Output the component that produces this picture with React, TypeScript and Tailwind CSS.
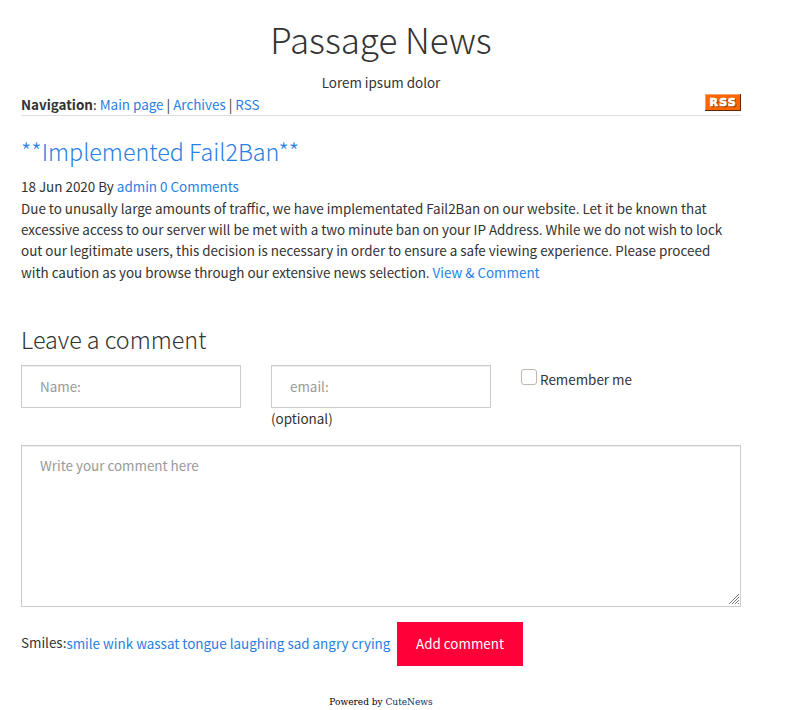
import React from 'react';

const smiles = ['smile', 'wink', 'wassat', 'tongue', 'laughing', 'sad', 'angry', 'crying'];

function Link({ children }: { children: React.ReactNode }) {
  return <a href="#" className="text-[#2780e3]">{children}</a>;
}

function RssBadge() {
  return (
    <svg width="36" height="17" viewBox="0 0 36 17" className="mb-[4px] block">
      <rect width="36" height="17" fill="#ff6600" />
      <path d="M0 .5H35M.5 0V16" stroke="#ffa264" fill="none" />
      <path d="M0 16.5H36M35.5 0V17" stroke="#5c2700" fill="none" />
      <g fontFamily="'DejaVu Sans', sans-serif" fontWeight="700" fontSize="11" strokeWidth="0.7">
        <text x="5.6" y="13" textLength="26" fill="#8f3900" stroke="#8f3900">RSS</text>
        <text x="4.6" y="12" textLength="26" fill="#fff" stroke="#fff">RSS</text>
      </g>
    </svg>
  );
}

export default function App() {
  return (
    <div className="h-[710px] w-[793px] overflow-hidden bg-white pl-[21px] pt-[18px] font-['Noto_Sans_CJK_SC','Source_Sans_Pro',sans-serif] text-[13.43px] leading-[21.4px] text-[#333333]">
      <div className="w-[720px]">
        <header>
          <h1 className="h-[42px] text-center text-[35px] font-light leading-[42px]">Passage News</h1>
          <div className="mt-[12px] text-center">Lorem ipsum dolor</div>
          <div className="flex h-[23px] items-end justify-between border-b border-[#dddddd]">
            <nav className="whitespace-nowrap">
              <b>Navigation</b>: <Link>Main page</Link> | <Link>Archives</Link> | <Link>RSS</Link>
            </nav>
            <RssBadge />
          </div>
        </header>

        <article className="pt-[21px]">
          <h2 className="h-[29px] text-[23.3px] font-light leading-[29px]"><Link>**Implemented Fail2Ban**</Link></h2>
          <div className="mt-[9.7px]">18 Jun 2020 By <Link>admin</Link> <Link>0 Comments</Link></div>
          <p className="whitespace-nowrap">
            Due to unusally large amounts of traffic, we have implementated Fail2Ban on our website. Let it be known that<br />
            excessive access to our server will be met with a two minute ban on your IP Address. While we do not wish to lock<br />
            out our legitimate users, this decision is necessary in order to ensure a safe viewing experience. Please proceed<br />
            with caution as you browse through our extensive news selection. <Link>View &amp; Comment</Link>
          </p>
        </article>

        <form className="pt-[42.3px]">
          <h3 className="h-[29px] text-[23.3px] font-light leading-[29px]">Leave a comment</h3>
          <div className="mt-[11px] flex h-[80px] items-start gap-[30px]">
            <input placeholder="Name:" className="h-[43px] w-[220px] border border-[#cccccc] px-[18px] pb-[2px] shadow-[inset_0_1px_1px_rgba(0,0,0,0.075)] placeholder:text-[#999999]" />
            <div>
              <input placeholder="email:" className="block h-[43px] w-[220px] border border-[#cccccc] px-[18px] pb-[2px] shadow-[inset_0_1px_1px_rgba(0,0,0,0.075)] placeholder:text-[#999999]" />
              <div>(optional)</div>
            </div>
            <label className="flex items-start gap-[3px] pt-[4px]">
              <span className="h-[16px] w-[16px] rounded-[3px] border border-[#bfb8b1] bg-white" />
              <span>Remember me</span>
            </label>
          </div>
          <div className="flex h-[162px] items-end justify-end border border-[#cccccc] shadow-[inset_0_1px_1px_rgba(0,0,0,0.075)]">
            <div className="grow self-start pl-[18px] pt-[9px] text-[#999999]">Write your comment here</div>
            <svg width="12" height="12" viewBox="0 0 12 12" className="mb-px" stroke="#777" strokeWidth="1" shapeRendering="crispEdges">
              <path d="M1 11L11 1M4 11L11 4M7 11L11 7M10 11L11 10" />
            </svg>
          </div>
          <div className="mt-[15px] flex h-[44px] items-center whitespace-nowrap">
            <span className="pb-[4px]">Smiles:</span>
            <span className="pb-[2px]">{smiles.map((s, i) => <React.Fragment key={s}>{i > 0 && ' '}<Link>{s}</Link></React.Fragment>)}</span>
            <button type="button" className="ml-auto mr-[218px] h-[44px] w-[126px] bg-[#ff0039] pb-[2px] text-white">Add comment</button>
          </div>
        </form>

        <footer className="mt-[29px] text-center font-['DejaVu_Serif',serif] text-[9px] leading-[14px] text-black">
          Powered by <a href="#" className="text-[#003366]">CuteNews</a>
        </footer>
      </div>
    </div>
  );
}
